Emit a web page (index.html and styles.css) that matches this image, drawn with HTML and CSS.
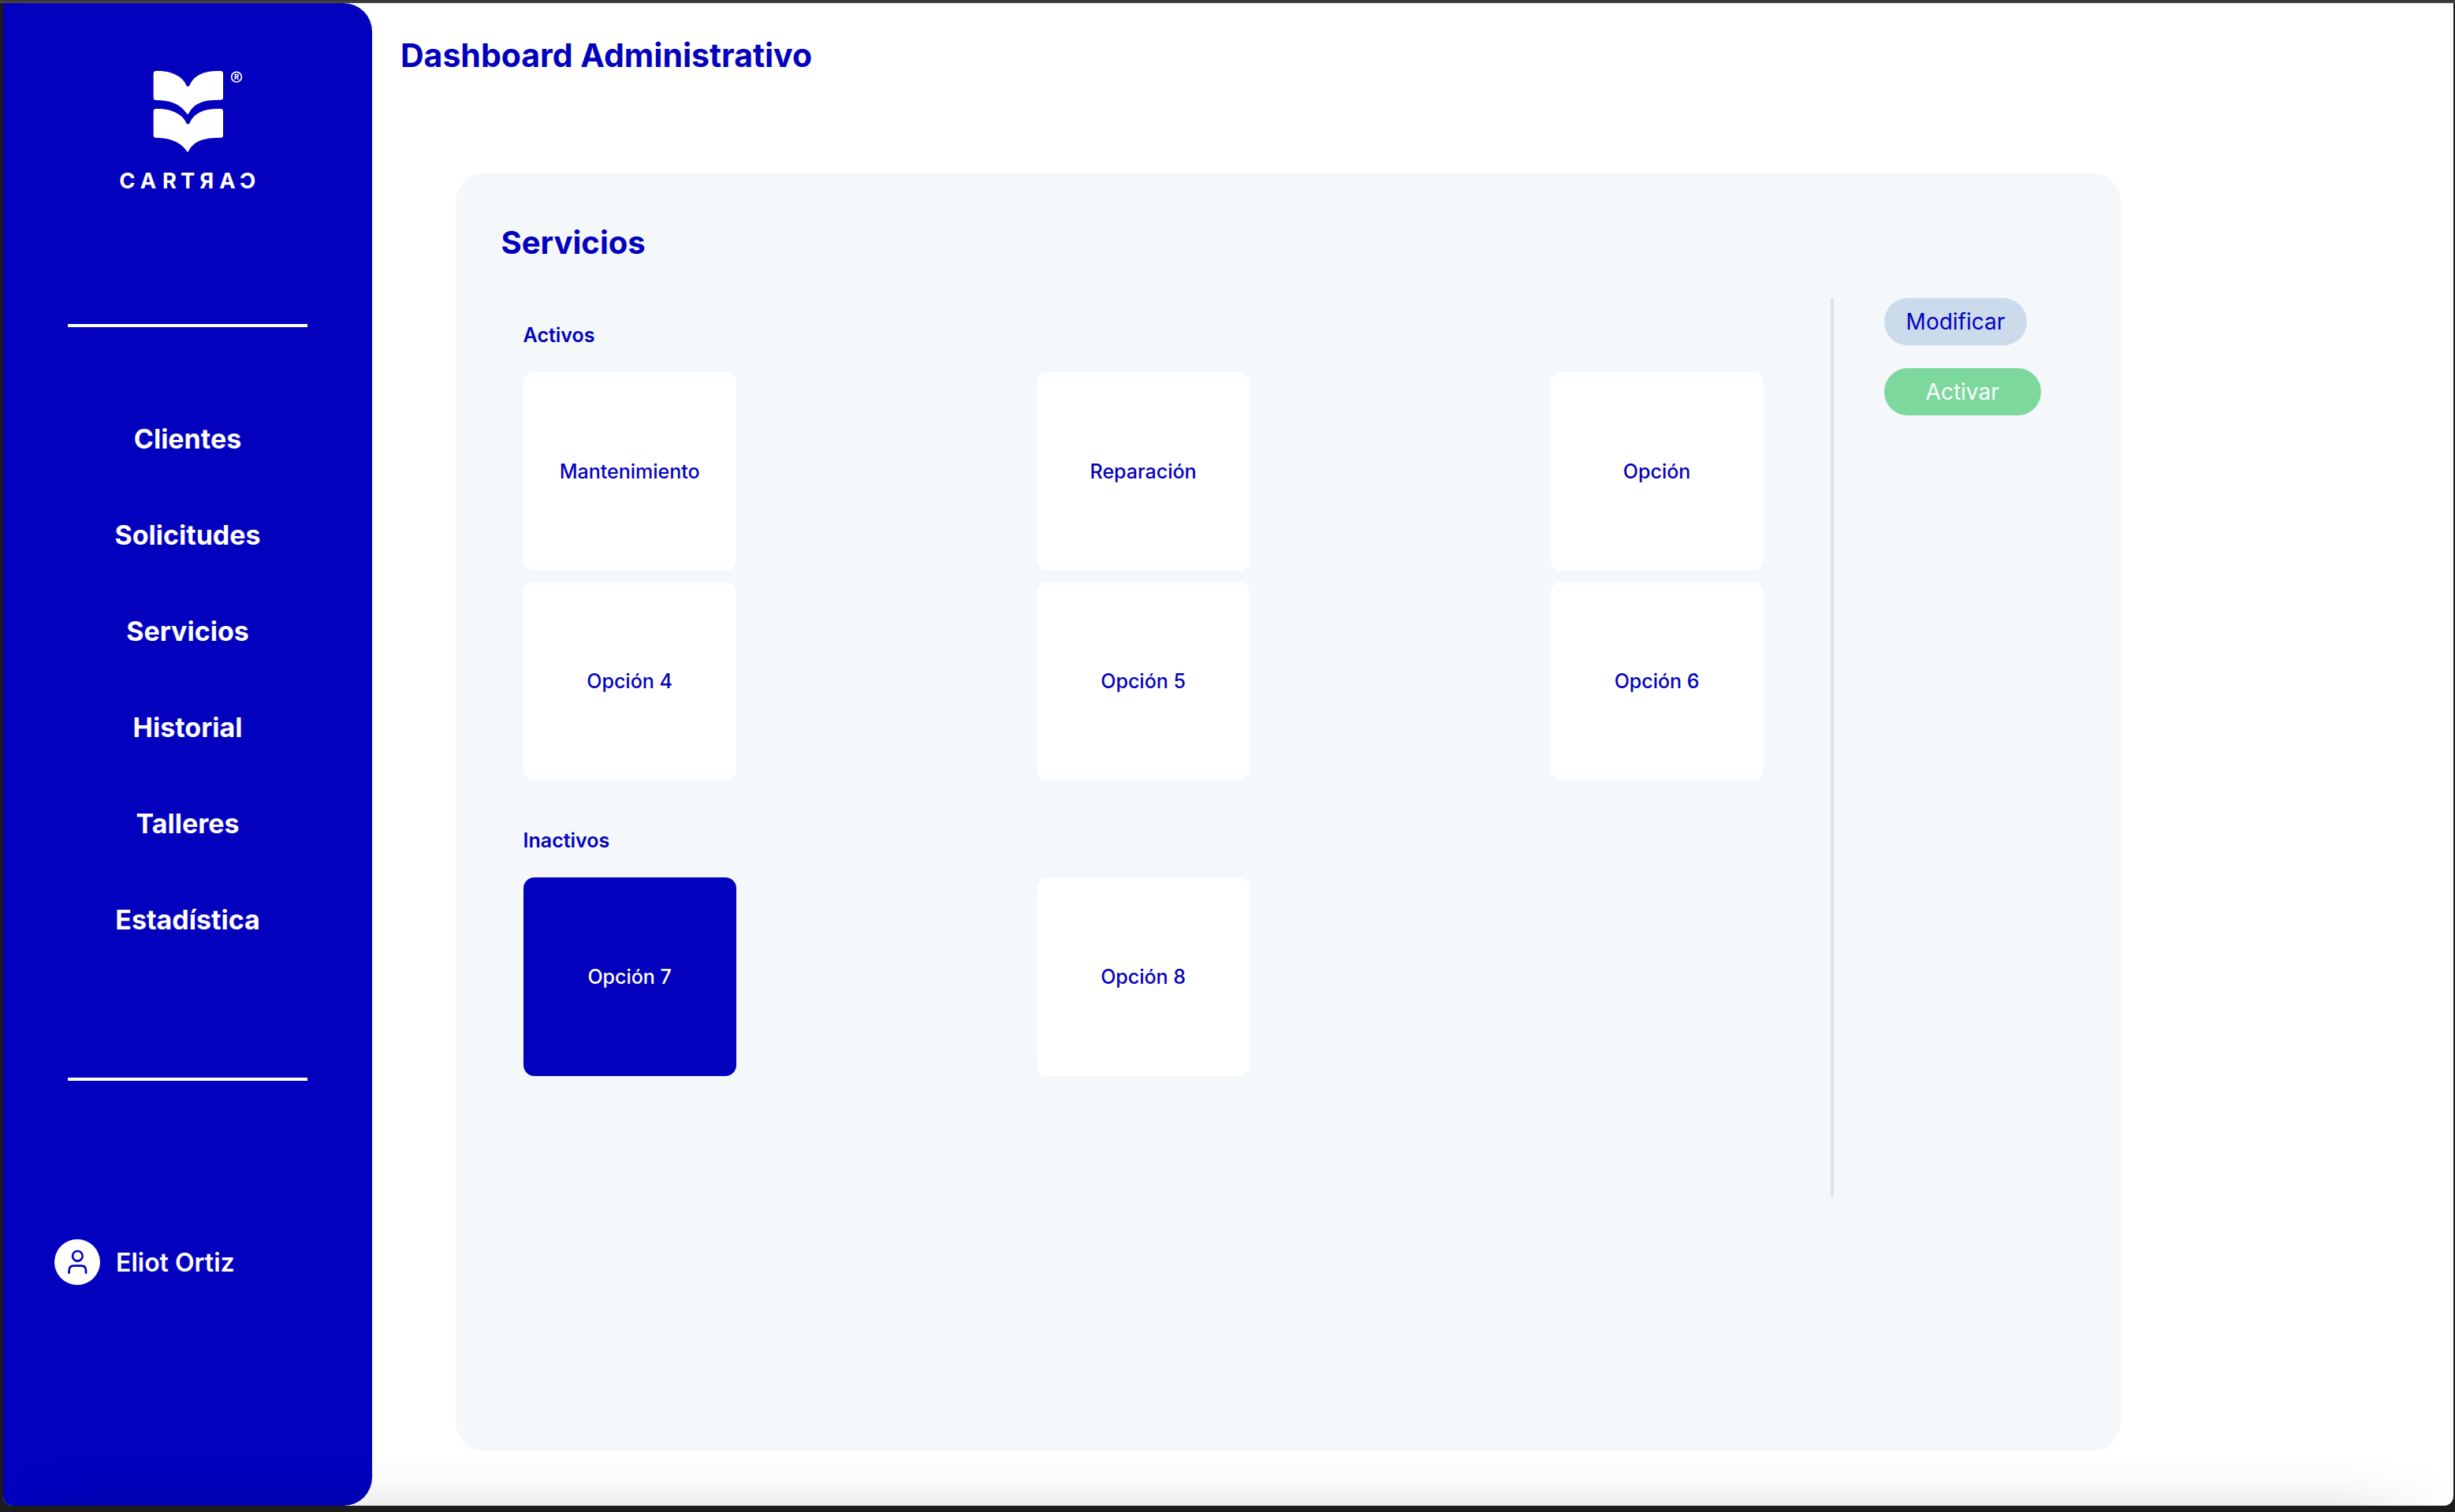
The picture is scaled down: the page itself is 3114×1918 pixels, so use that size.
FILE: index.html
```html
<!DOCTYPE html>
<html lang="es">
<head>
<meta charset="utf-8">
<meta name="viewport" content="width=device-width, initial-scale=1">
<title>Dashboard Administrativo</title>
<link rel="stylesheet" href="styles.css">
</head>
<body>
<div class="window">
  <div class="app">
    <aside class="sidebar">
      <svg class="logo" viewBox="60 54 528 489" role="img" aria-label="Cartrac">
        <g fill="#fff">
          <path d="M203 60C262 58 307 82 318 113Q325 126 332 113C352 72 392 58 450 60Q459 61 459 70V162Q459 170 450 170C398 169 352 176 329 220Q324 231 319 220C295 185 255 171 203 171Q194 171 194 162V70Q194 61 203 60Z"/>
          <path d="M203 204C262 202 307 226 318 257Q325 268 332 257C352 216 392 202 450 204Q459 205 459 213V305Q459 314 450 314C394 313 350 323 328 364Q324 374 320 364C295 328 255 315 203 314Q194 314 194 305V213Q194 205 203 204Z"/>
          <circle cx="510" cy="83" r="19" fill="none" stroke="#fff" stroke-width="5"/>
          <text class="logo-mark" x="510" y="93" text-anchor="middle">R</text>
          <text class="logo-name" y="507" text-anchor="middle" x="94 174 255 324 397 475 552">CARTЯAƆ</text>
        </g>
      </svg>
      <hr class="rule">
      <nav class="menu">
        <a href="#clientes">Clientes</a>
        <a href="#solicitudes">Solicitudes</a>
        <a href="#servicios">Servicios</a>
        <a href="#historial">Historial</a>
        <a href="#talleres">Talleres</a>
        <a href="#estadistica">Estadística</a>
      </nav>
      <hr class="rule">
      <a class="user" href="#perfil">
        <svg class="avatar" viewBox="0 0 174 174" aria-hidden="true">
          <circle cx="87" cy="87" r="87" fill="#fff"/>
          <g fill="none" stroke="#0300be" stroke-width="8" stroke-linecap="round">
            <circle cx="88" cy="64" r="19"/>
            <path d="M56 128V119Q56 101 74 101H102Q120 101 120 119V128"/>
          </g>
        </svg>
        <span>Eliot Ortiz</span>
      </a>
    </aside>
    <main class="main">
      <h1 class="title page-title">Dashboard Administrativo</h1>
      <section class="panel" id="servicios">
        <h2 class="title">Servicios</h2>
        <div class="panel-body">
          <div class="services">
            <h3 class="group">Activos</h3>
            <div class="tiles">
              <button class="tile" type="button">Mantenimiento</button>
              <button class="tile" type="button">Reparación</button>
              <button class="tile" type="button">Opción</button>
              <button class="tile" type="button">Opción 4</button>
              <button class="tile" type="button">Opción 5</button>
              <button class="tile" type="button">Opción 6</button>
            </div>
            <h3 class="group">Inactivos</h3>
            <div class="tiles">
              <button class="tile selected" type="button" aria-pressed="true">Opción 7</button>
              <button class="tile" type="button">Opción 8</button>
            </div>
          </div>
          <div class="actions">
            <button class="pill edit" type="button">Modificar</button>
            <button class="pill activate" type="button">Activar</button>
          </div>
        </div>
      </section>
    </main>
    <div class="shade"></div>
  </div>
</div>
</body>
</html>
```
FILE: styles.css
```css
:root {
  --blue: #0300be;
  --frame: #1c1c1c;
}

* {
  box-sizing: border-box;
}

body {
  margin: 0;
  font-family: Inter, "Liberation Sans", sans-serif;
  color: var(--blue);
  background: var(--frame);
}

h1, h2, h3 {
  margin: 0;
}

button {
  border: 0;
  font-family: inherit;
  color: inherit;
  cursor: pointer;
}

.window {
  display: flex;
  min-height: 100vh;
  padding: 2px 2px 8px 4px;
  border-top: 2px solid #363636;
  background: linear-gradient(#484848 2px, var(--frame) 2px);
}

.app {
  position: relative;
  display: flex;
  flex: 1;
  overflow: hidden;
  border-radius: 0 0 12px 12px;
  background: #fff;
}

.sidebar {
  display: flex;
  flex-direction: column;
  align-items: center;
  flex: none;
  width: 468px;
  padding-top: 84px;
  border-radius: 0 36px 36px 0;
  background: var(--blue);
  color: #fff;
}

.logo {
  width: 176px;
  height: 163px;
  margin-bottom: 160px;
}

.logo-name {
  font-size: 82px;
  font-weight: 700;
}

.logo-mark {
  font-size: 28px;
  font-weight: 700;
}

.rule {
  width: 65%;
  height: 4px;
  margin: 0;
  border: 0;
  background: #fff;
}

.menu {
  display: flex;
  flex-direction: column;
  align-items: center;
  gap: 78px;
  padding: 120px 0 178px;
}

.menu a {
  font-size: 34px;
  line-height: 44px;
  font-weight: 700;
  color: inherit;
  text-decoration: none;
}

.user {
  display: flex;
  align-items: center;
  align-self: flex-start;
  gap: 20px;
  margin: 201px 0 0 65px;
  font-size: 32px;
  font-weight: 600;
  color: inherit;
  text-decoration: none;
}

.avatar {
  width: 58px;
  height: 58px;
}

.main {
  display: flex;
  flex-direction: column;
  flex: 1;
  padding: 40px 0 70px;
}

.title {
  font-size: 40px;
  line-height: 52px;
  font-weight: 700;
}

.page-title {
  margin-left: 36px;
  font-size: 41px;
}

.panel {
  flex: 1;
  width: 80%;
  margin: 124px 0 0 4%;
  padding: 62px 0 0 58px;
  border-radius: 36px;
  background: #f4f8fb;
}

.panel-body {
  display: flex;
  min-height: 1140px;
  margin-top: 44px;
}

.services {
  flex: 1;
  padding: 30px 85px 0 28px;
  border-right: 4px solid #dfe3ef;
}

.group {
  margin-bottom: 30px;
  font-size: 25px;
  line-height: 34px;
  font-weight: 600;
}

.tiles {
  display: grid;
  grid-template-columns: repeat(3, 270px);
  justify-content: space-between;
  gap: 14px;
}

.tiles + .group {
  margin-top: 59px;
}

.tile {
  height: 252px;
  border-radius: 14px;
  background: #fff;
  font-size: 25px;
  font-weight: 500;
}

.tile.selected {
  background: var(--blue);
  color: #fff;
}

.actions {
  display: flex;
  flex-direction: column;
  align-items: flex-start;
  gap: 29px;
  flex: none;
  width: 364px;
  padding-left: 64px;
}

.pill {
  height: 60px;
  border-radius: 30px;
  font-size: 28px;
}

.edit {
  padding: 0 28px;
  background: #cbdbeb;
}

.activate {
  padding: 0 53px;
  background: #7cd89d;
  color: #fff;
}

/* soft shadow along the lower edge of the window */
.shade {
  position: absolute;
  right: 0;
  bottom: 0;
  left: 0;
  height: 64px;
  pointer-events: none;
  background: linear-gradient(rgba(0, 0, 0, 0), rgba(0, 0, 0, 0.02) 50%, rgba(0, 0, 0, 0.07));
  mask-image: linear-gradient(to right, transparent, #000 140px calc(100% - 150px), transparent);
}
```
